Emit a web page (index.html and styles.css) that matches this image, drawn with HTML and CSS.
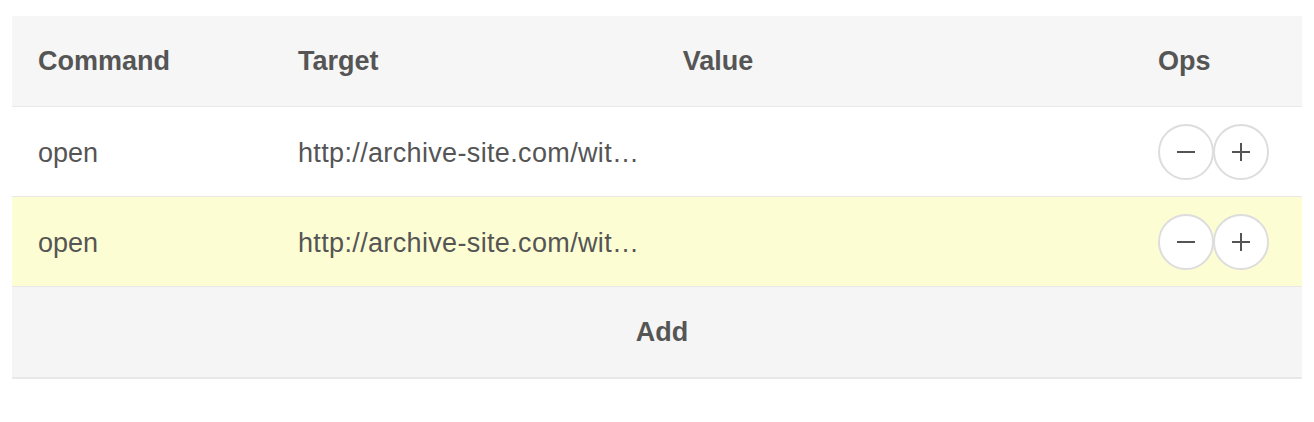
FILE: index.html
```html
<!DOCTYPE html>
<html>
<head>
<meta charset="utf-8">
<link rel="stylesheet" href="styles.css">
</head>
<body>
<div class="table">
  <div class="row head">
    <div class="cell">Command</div>
    <div class="cell">Target</div>
    <div class="cell center">Value</div>
    <div class="cell"></div>
    <div class="cell">Ops</div>
  </div>
  <div class="row body">
    <div class="cell">open</div>
    <div class="cell target">http://archive-site.com/wit…</div>
    <div class="cell"></div>
    <div class="cell"></div>
    <div class="cell ops">
      <button class="circ" aria-label="remove"><svg width="20" height="20" viewBox="0 0 20 20"><path d="M1 10H19" stroke="#555" stroke-width="2"/></svg></button>
      <button class="circ" aria-label="add"><svg width="20" height="20" viewBox="0 0 20 20"><path d="M1 10H19M10 1V19" stroke="#555" stroke-width="2"/></svg></button>
    </div>
  </div>
  <div class="row body hl">
    <div class="cell">open</div>
    <div class="cell target">http://archive-site.com/wit…</div>
    <div class="cell"></div>
    <div class="cell"></div>
    <div class="cell ops">
      <button class="circ" aria-label="remove"><svg width="20" height="20" viewBox="0 0 20 20"><path d="M1 10H19" stroke="#555" stroke-width="2"/></svg></button>
      <button class="circ" aria-label="add"><svg width="20" height="20" viewBox="0 0 20 20"><path d="M1 10H19M10 1V19" stroke="#555" stroke-width="2"/></svg></button>
    </div>
  </div>
  <div class="add">Add</div>
</div>
</body>
</html>
```

FILE: styles.css
```css
* { box-sizing: border-box; }
html, body { margin: 0; padding: 0; background: #fff; }
body {
  padding: 16px 12px;
  font-family: "Liberation Sans", Arial, sans-serif;
  color: #555;
}
.table { width: 1290px; }
.row {
  display: grid;
  grid-template-columns: 260px 392px 108px 360px 170px;
  height: 90px;
  border-bottom: 1px solid #e8e8e8;
  align-items: center;
  font-size: 27px;
  color: #555;
}
.row.head {
  height: 91px;
  background: #f6f6f6;
  font-weight: bold;
  font-size: 27px;
}
.row.hl { background: #fdfdd3; }
.cell {
  padding: 0 26px;
  white-space: nowrap;
}
.row.body .cell { padding-top: 3px; }
.row.body .cell.ops { padding-top: 0; }
.cell.center { text-align: center; padding: 0; }
.cell.target { letter-spacing: 0.35px; }
.ops { display: flex; align-items: center; }
.circ {
  width: 56px;
  height: 56px;
  border-radius: 50%;
  border: 2px solid #ddd;
  background: #fff;
  padding: 0;
  margin: 0 -1px 0 0;
  display: flex;
  align-items: center;
  justify-content: center;
}
.add {
  height: 92px;
  background: #f5f5f5;
  border-bottom: 2px solid #e8e8e8;
  display: flex;
  align-items: center;
  justify-content: center;
  padding-left: 10px;
  font-weight: bold;
  font-size: 27px;
  color: #555;
}
```
